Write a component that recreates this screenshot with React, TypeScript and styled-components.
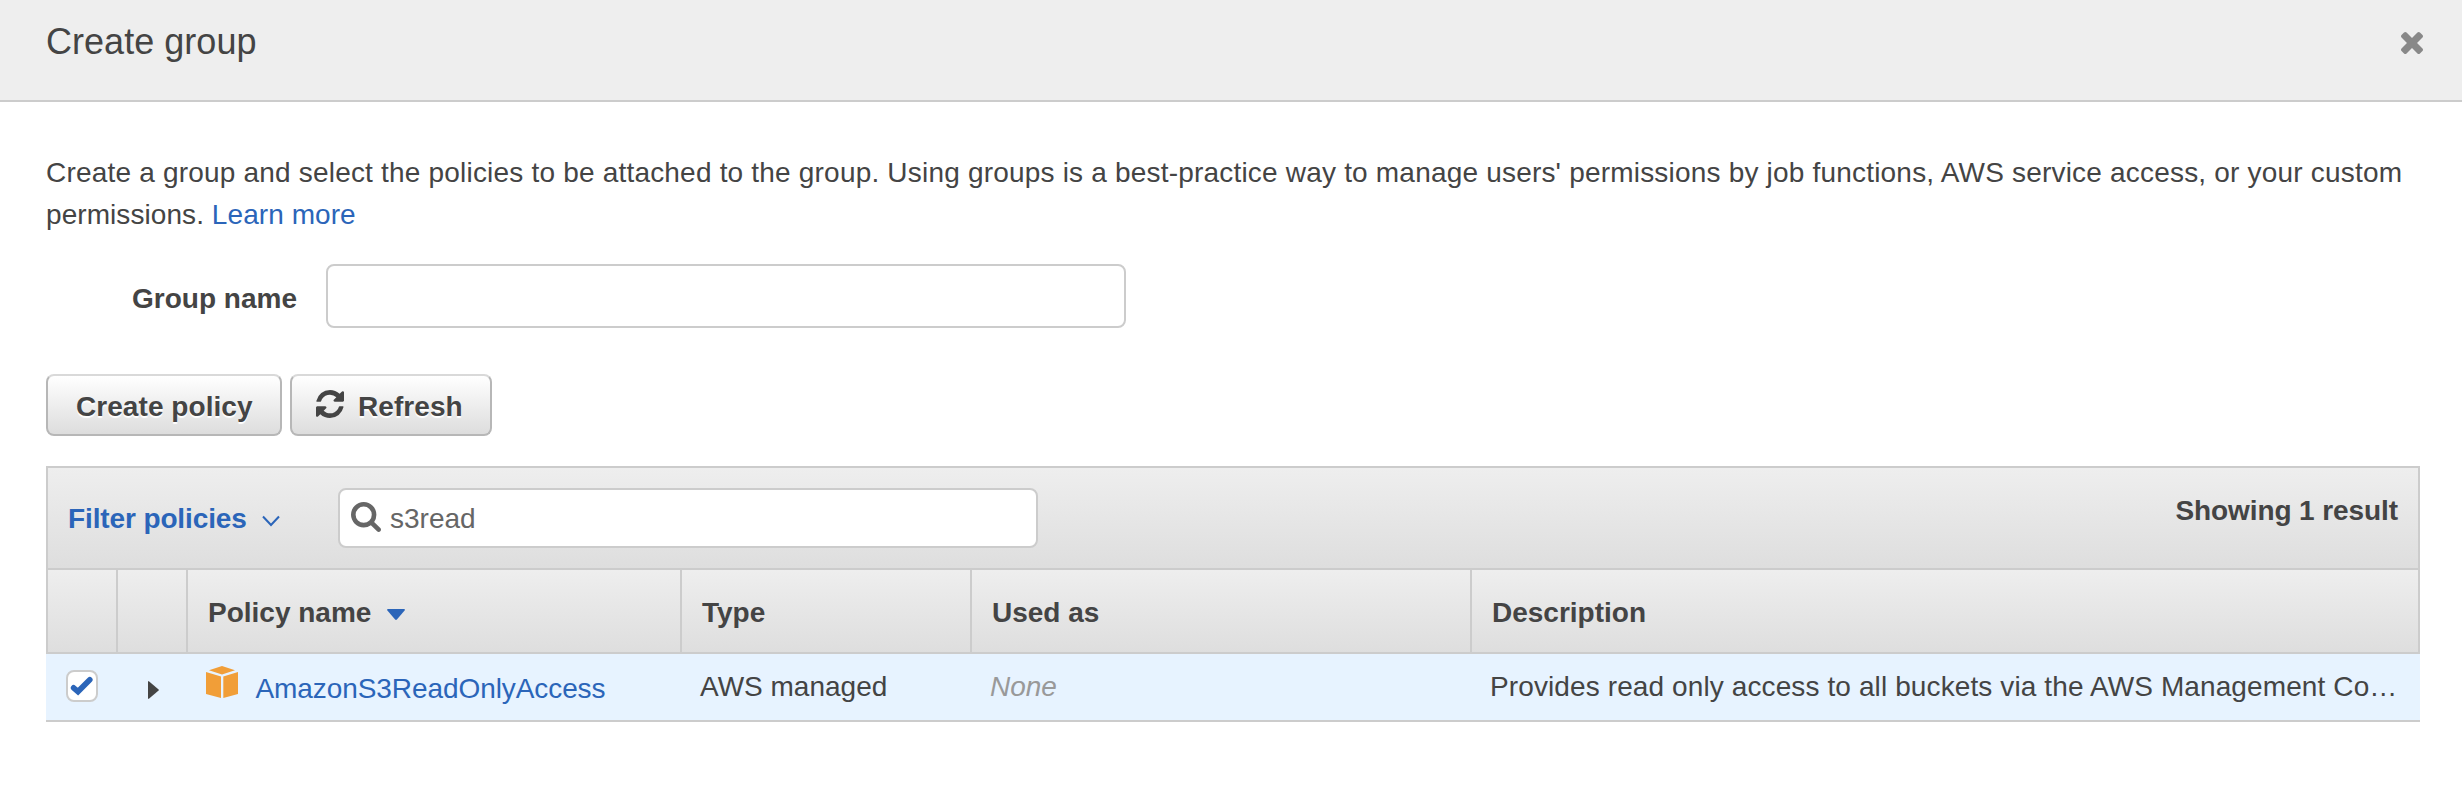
import React from "react";
import styled, { createGlobalStyle } from "styled-components";

const GlobalStyle = createGlobalStyle`
  *, *::before, *::after { box-sizing: border-box; }
  body {
    margin: 0;
    background: #fff;
    color: #444;
    font-family: "Liberation Sans", Arial, sans-serif;
    font-size: 28px;
    line-height: 42px;
  }
`;

const COLUMNS = "70px 70px 494px 290px 500px 1fr";

const Dialog = styled.section`
  display: flex;
  flex-direction: column;
  min-height: 794px;
`;

const Header = styled.header`
  display: flex;
  align-items: flex-start;
  justify-content: space-between;
  height: 102px;
  padding: 21px 39px 0 46px;
  background: #eee;
  border-bottom: 2px solid #ccc;
`;

const Title = styled.h1`
  margin: 0;
  font-size: 36px;
  font-weight: 400;
  line-height: 42px;
  letter-spacing: 0.03px;
`;

const CloseButton = styled.button`
  display: flex;
  margin: 11px 0 0;
  padding: 0;
  border: 0;
  background: none;
  color: #888;
`;

const Body = styled.main`
  display: flex;
  flex-direction: column;
  padding: 50px 42px 0 46px;
`;

const Intro = styled.p`
  margin: 0 0 28px;
  white-space: nowrap;
  letter-spacing: 0.195px;
`;

const IntroTail = styled.span`
  letter-spacing: 0.07px;
`;

const Link = styled.a<{ $tracking?: string }>`
  color: #2b65b9;
  text-decoration: none;
  letter-spacing: ${(p) => p.$tracking ?? "inherit"};
`;

const Field = styled.div`
  display: flex;
  align-items: center;
  height: 64px;
`;

const FieldLabel = styled.label`
  width: 280px;
  padding: 5px 29px 0 0;
  font-weight: 700;
  text-align: right;
`;

const TextInput = styled.input`
  width: 800px;
  height: 64px;
  padding: 0 16px;
  border: 2px solid #ccc;
  border-radius: 8px;
  background: #fff;
  color: #444;
  font: inherit;
`;

const Actions = styled.div`
  display: flex;
  gap: 8px;
  margin: 46px 0 30px;
`;

const ActionButton = styled.button<{ $width: number }>`
  display: flex;
  align-items: center;
  width: ${(p) => p.$width}px;
  height: 62px;
  padding: 3px 0 0 28px;
  border: 2px solid #b7b7b7;
  border-top-color: #d9d9d9;
  border-radius: 8px;
  background: linear-gradient(#fff, #ddd);
  color: #444;
  font: inherit;
  font-weight: 700;
  letter-spacing: 0.06px;
  white-space: nowrap;
  text-shadow: 0 2px 1px #fff;
`;

const RefreshGlyph = styled.span`
  display: flex;
  width: 42px;
  margin: -6px 0 0 -4px;
`;

const Panel = styled.div`
  display: flex;
  flex-direction: column;
`;

const Toolbar = styled.div`
  display: flex;
  align-items: flex-start;
  height: 104px;
  padding: 20px 20px 0;
  border: 2px solid #ccc;
  background: linear-gradient(#eee, #dedede);
`;

const FilterButton = styled.button`
  display: flex;
  align-items: center;
  width: 270px;
  height: 60px;
  padding: 1px 0 0;
  border: 0;
  background: none;
  color: #2b65b9;
  font: inherit;
  font-weight: 700;
  letter-spacing: -0.12px;
  white-space: nowrap;
`;

const ChevronGlyph = styled.span`
  display: flex;
  margin: 4px 0 0 15.5px;
`;

const SearchBox = styled.label`
  display: flex;
  align-items: center;
  width: 700px;
  height: 60px;
  padding-left: 11px;
  border: 2px solid #ccc;
  border-radius: 8px;
  background: #fff;
  color: #666;
`;

const SearchInput = styled.input`
  flex: 1;
  min-width: 0;
  height: 44px;
  margin-left: 9px;
  padding: 2px 0 0;
  border: 0;
  outline: 0;
  background: transparent;
  color: #666;
  font: inherit;
`;

const SearchGlyph = styled.span`
  display: flex;
  margin-top: -2px;
`;

const ResultCount = styled.span`
  margin: 2px 0 0 auto;
  font-weight: 700;
  letter-spacing: -0.09px;
  white-space: nowrap;
`;

const HeadRow = styled.div`
  display: grid;
  grid-template-columns: ${COLUMNS};
  height: 84px;
  border: 2px solid #ccc;
  border-top: 0;
  background: linear-gradient(#eee, #dedede);
`;

const HeadCell = styled.div`
  display: flex;
  align-items: center;
  padding: 4px 0 0 20px;
  border-right: 2px solid #ccc;
  font-weight: 700;
  &:last-child { border-right: 0; }
`;

const SortGlyph = styled.span`
  display: flex;
  margin: 3px 0 0 15.5px;
`;

const Row = styled.div`
  display: grid;
  grid-template-columns: ${COLUMNS};
  height: 68px;
  padding: 0 2px;
  border-bottom: 2px solid #ccc;
  background: #e7f3ff;
`;

const Cell = styled.div<{ $muted?: boolean; $tracking?: string }>`
  min-width: 0;
  padding: 12px 0 0 18px;
  overflow: hidden;
  white-space: nowrap;
  letter-spacing: ${(p) => p.$tracking ?? "normal"};
  color: ${(p) => (p.$muted ? "#999" : "#444")};
  font-style: ${(p) => (p.$muted ? "italic" : "normal")};
`;

const NameCell = styled.div`
  display: flex;
  align-items: flex-start;
  gap: 17.5px;
  padding: 12px 0 0 18px;
`;

const LinkText = styled.span`
  padding-top: 2px;
`;

const CheckCell = styled.div`
  padding: 16px 0 0 18px;
`;

const Checkbox = styled.span`
  display: flex;
  width: 32px;
  height: 32px;
  border: 2px solid #ccc;
  border-radius: 8px;
  background: #fff;
`;

const ExpandCell = styled.div`
  padding: 27px 0 0 30px;
  line-height: 0;
`;

const CloseIcon = () => (
  <svg width="22" height="22" viewBox="302 430 1188 1188" fill="currentColor">
    <path transform="translate(0 64)" d="M1490 1322q0 40-28 68l-136 136q-28 28-68 28t-68-28l-294-294-294 294q-28 28-68 28t-68-28l-136-136q-28-28-28-68t28-68l294-294-294-294q-28-28-28-68t28-68l136-136q28-28 68-28t68 28l294 294 294-294q28-28 68-28t68 28l136 136q28 28 28 68t-28 68l-294 294 294 294q28 28 28 68z" />
  </svg>
);

const RefreshIcon = () => (
  <svg width="28" height="28" viewBox="128 128 1536 1536" fill="currentColor">
    <path d="M1639 1056q0 5-1 7-64 268-268 434.5t-478 166.5q-146 0-282.5-55t-243.5-157l-129 129q-19 19-45 19t-45-19-19-45v-448q0-26 19-45t45-19h448q26 0 45 19t19 45-19 45l-137 137q71 66 161 102t187 36q134 0 250-65t186-179q11-17 53-117 8-23 30-23h192q13 0 22.5 9.5t9.5 22.5zm25-800v448q0 26-19 45t-45 19h-448q-26 0-45-19t-19-45 19-45l138-138q-148-137-349-137-134 0-250 65t-186 179q-11 17-53 117-8 23-30 23h-199q-13 0-22.5-9.5t-9.5-22.5v-7q65-268 270-434.5t480-166.5q146 0 284 55.5t245 156.5l130-129q19-19 45-19t45 19 19 45z" />
  </svg>
);

const SearchIcon = () => (
  <svg width="30" height="30" viewBox="64 128 1664 1664" fill="currentColor">
    <path d="M1216 832q0-185-131.5-316.5t-316.5-131.5-316.5 131.5-131.5 316.5 131.5 316.5 316.5 131.5 316.5-131.5 131.5-316.5zm512 832q0 52-38 90t-90 38q-54 0-90-38l-343-342q-179 124-399 124-143 0-273.5-55.5t-225-150-150-225-55.5-273.5 55.5-273.5 150-225 225-150 273.5-55.5 273.5 55.5 225 150 150 225 55.5 273.5q0 220-124 399l343 343q37 37 37 90z" />
  </svg>
);

const ChevronIcon = () => (
  <svg width="18" height="12" viewBox="0 0 18 12" fill="none" stroke="currentColor" strokeWidth="2">
    <path d="M1 1.5 9 10 17 1.5" />
  </svg>
);

const SortIcon = () => (
  <svg width="18" height="11" viewBox="0 0 18 11" fill="#2b65b9">
    <path d="M.8 0H17.200Q18.300.4 17.600 1.400L9.900 10.500q-.9.9-1.800 0L.4 1.400Q-.3.4.8 0z" />
  </svg>
);

const CheckIcon = () => (
  <svg width="28" height="28" viewBox="0 0 28 28" fill="none" stroke="#2b65b9" strokeWidth="5.600" strokeLinecap="round">
    <path d="M5.600 15.800 10 19.600 21.800 7.800" />
  </svg>
);

const ExpandIcon = () => (
  <svg width="11" height="18" viewBox="0 0 11 18" fill="#444">
    <path d="M0 .7Q.3-.3 1.200.4L10.600 8.400q.6.6 0 1.200L1.200 17.600Q.3 18.300 0 17.300z" />
  </svg>
);

const CubeIcon = () => (
  <svg width="32" height="32" viewBox="0 0 32 32" fill="#f19e38">
    <path d="M16 0 29 4.200 16 8.400 3 4.200z" />
    <path d="M0 6 15 10.500V32L0 28z" />
    <path d="M32 6 17.300 10.500V32L32 28z" />
  </svg>
);

export default function App() {
  return (
    <Dialog>
      <GlobalStyle />
      <Header>
        <Title>Create group</Title>
        <CloseButton aria-label="Close"><CloseIcon /></CloseButton>
      </Header>
      <Body>
        <Intro>
          Create a group and select the policies to be attached to the group. Using groups is a best-practice way to manage users' permissions by job functions, AWS service access, or your custom
          <br />
          <IntroTail>permissions. <Link>Learn more</Link></IntroTail>
        </Intro>
        <Field>
          <FieldLabel htmlFor="group-name">Group name</FieldLabel>
          <TextInput id="group-name" />
        </Field>
        <Actions>
          <ActionButton $width={236}>Create policy</ActionButton>
          <ActionButton $width={202}>
            <RefreshGlyph><RefreshIcon /></RefreshGlyph>
            Refresh
          </ActionButton>
        </Actions>
        <Panel>
          <Toolbar>
            <FilterButton>
              Filter policies
              <ChevronGlyph><ChevronIcon /></ChevronGlyph>
            </FilterButton>
            <SearchBox>
              <SearchGlyph><SearchIcon /></SearchGlyph>
              <SearchInput defaultValue="s3read" aria-label="Search policies" />
            </SearchBox>
            <ResultCount>Showing 1 result</ResultCount>
          </Toolbar>
          <HeadRow>
            <HeadCell />
            <HeadCell />
            <HeadCell>
              Policy name
              <SortGlyph><SortIcon /></SortGlyph>
            </HeadCell>
            <HeadCell>Type</HeadCell>
            <HeadCell>Used as</HeadCell>
            <HeadCell>Description</HeadCell>
          </HeadRow>
          <Row>
            <CheckCell><Checkbox><CheckIcon /></Checkbox></CheckCell>
            <ExpandCell><ExpandIcon /></ExpandCell>
            <NameCell>
              <CubeIcon />
              <LinkText><Link $tracking="-0.08px">AmazonS3ReadOnlyAccess</Link></LinkText>
            </NameCell>
            <Cell>AWS managed</Cell>
            <Cell $muted>None</Cell>
            <Cell $tracking="0.11px">Provides read only access to all buckets via the AWS Management Co…</Cell>
          </Row>
        </Panel>
      </Body>
    </Dialog>
  );
}
